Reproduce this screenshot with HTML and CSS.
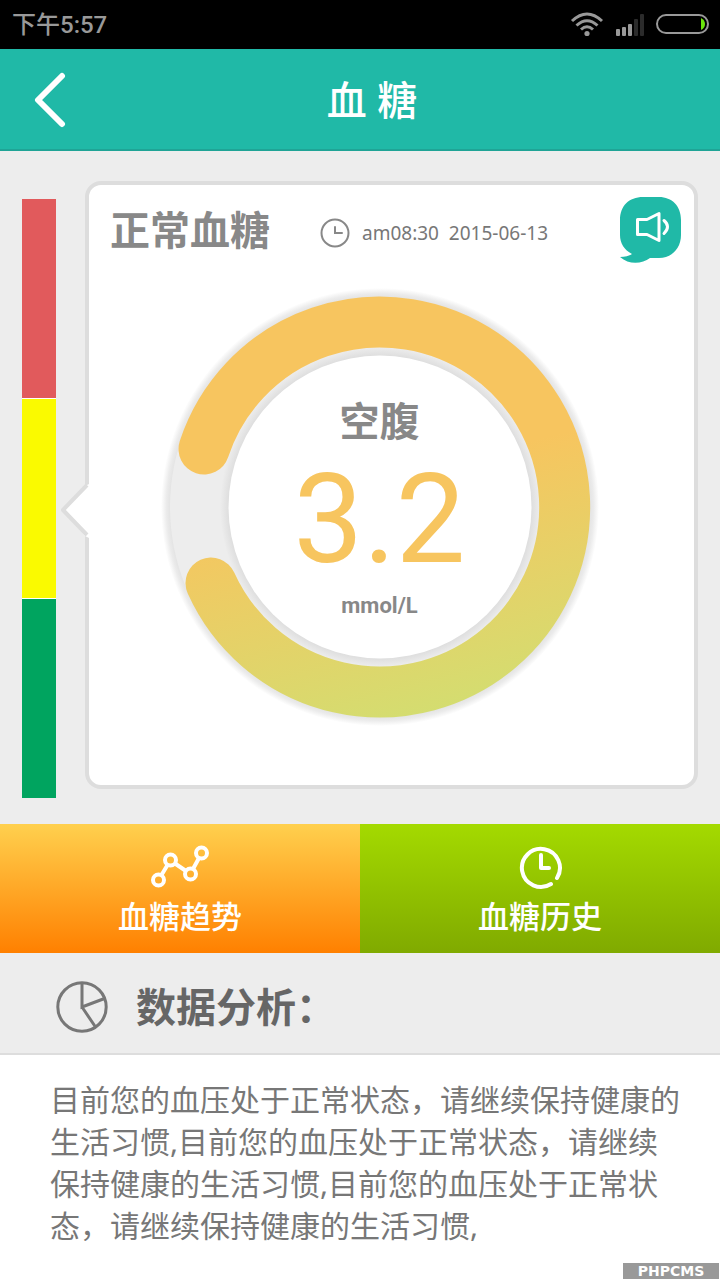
FILE: index.html
```html
<!DOCTYPE html>
<html lang="zh-CN">
<head>
<meta charset="utf-8">
<meta name="viewport" content="width=device-width, initial-scale=1">
<title>血糖</title>
<link rel="stylesheet" href="styles.css">
</head>
<body>
<div class="status">
  <span class="status-time">下午5:57</span>
  <svg class="status-icons" width="140" height="28" viewBox="0 0 140 28" aria-hidden="true">
    <g fill="none" stroke="#999" stroke-width="3">
      <path d="M2 10Q17 -4 32 10"/>
      <path d="M6.500 14.500Q17 5 27.500 14.500"/>
      <path d="M11 18.500Q17 13 23 18.500"/>
      <rect x="87" y="4" width="51" height="18" rx="9" stroke-width="2"/>
    </g>
    <circle cx="17" cy="22.500" r="2.600" fill="#999"/>
    <g fill="#999">
      <rect x="46" y="18" width="4" height="7" rx="1"/>
      <rect x="52" y="16" width="4" height="9" rx="1"/>
      <rect x="58" y="13" width="4" height="12" rx="1"/>
    </g>
    <g fill="#2b2b2b">
      <rect x="64" y="8" width="4" height="17" rx="1"/>
      <rect x="70" y="3" width="4" height="22" rx="1"/>
    </g>
    <path d="M131 7Q135 9 135 13T131 19Z" fill="#6be60c"/>
  </svg>
</div>

<header class="topbar">
  <button class="back" type="button" aria-label="返回">
    <svg width="32" height="56" viewBox="0 0 32 56"><path d="M28 4L4 28L28 52" fill="none" stroke="#fff" stroke-width="6" stroke-linecap="round" stroke-linejoin="round"/></svg>
  </button>
  <h1 class="topbar-title">血 糖</h1>
</header>

<main>
  <section class="reading">
    <div class="scale" aria-hidden="true">
      <div class="level level-high"></div>
      <div class="level level-normal"></div>
      <div class="level level-low"></div>
    </div>
    <article class="card">
      <svg class="pointer" width="28" height="54" viewBox="0 0 28 54" aria-hidden="true">
        <path d="M28 0L24 2L2 27L24 52L28 54Z" fill="#fff"/>
        <path d="M26 1L2 26L26 51" fill="none" stroke="#ddd" stroke-width="4" stroke-linejoin="round"/>
      </svg>
      <div class="card-head">
        <h2 class="card-title">正常血糖</h2>
        <div class="card-meta">
          <svg width="30" height="30" viewBox="0 0 30 30" aria-hidden="true">
            <g fill="none" stroke="#888" stroke-width="2" stroke-linecap="round">
              <circle cx="15" cy="15" r="13.500"/><path d="M15 9V15H22"/>
            </g>
          </svg>
          <time datetime="2015-06-13T08:30">am08:30&nbsp; 2015-06-13</time>
        </div>
        <button class="voice" type="button" aria-label="语音播报">
          <svg width="62" height="67" viewBox="0 0 62 67">
            <path d="M23 0H39C52 0 61 9 61 23V38C61 51 52 61 39 61H30C22 67 9 68 0 60C5 60 9 59 12 57C4 53 0 46 0 38V23C0 9 9 0 23 0Z" fill="#20b9a7"/>
            <g fill="none" stroke="#fff" stroke-width="3" stroke-linecap="round" stroke-linejoin="round">
              <path d="M17.500 22.500H27L39 16.500V43.500L27 37.500H17.500Z"/>
              <path d="M44 23.500Q51 29.500 44 36.500"/>
            </g>
          </svg>
        </button>
      </div>
      <div class="gauge">
        <svg class="gauge-ring" width="440" height="440" viewBox="0 0 440 440" aria-hidden="true">
          <defs>
            <linearGradient id="arc" gradientUnits="userSpaceOnUse" x1="220" y1="193" x2="280" y2="424">
              <stop offset="0" stop-color="#f7c55f"/><stop offset="1" stop-color="#d4dd70"/>
            </linearGradient>
            <radialGradient id="rim" gradientUnits="userSpaceOnUse" cx="220" cy="220" r="219">
              <stop offset="0.955" stop-color="#e2e2e2"/><stop offset="0.975" stop-color="#ebebeb"/><stop offset="1" stop-color="#fff"/>
            </radialGradient>
            <radialGradient id="hub" gradientUnits="userSpaceOnUse" cx="220" cy="220" r="160">
              <stop offset="0.945" stop-color="#dedede"/><stop offset="1" stop-color="#ededed"/>
            </radialGradient>
          </defs>
          <circle cx="220" cy="220" r="219" fill="url(#rim)"/>
          <circle cx="220" cy="220" r="210" fill="#ededed"/>
          <circle cx="220" cy="220" r="160" fill="url(#hub)"/>
          <path d="M44 162A185 185 0 1 1 51 296" fill="none" stroke="url(#arc)" stroke-width="51" stroke-linecap="round"/>
          <circle cx="220" cy="220" r="151.500" fill="#fff"/>
        </svg>
        <div class="gauge-text">
          <div class="gauge-label">空腹</div>
          <div class="gauge-value">3.2</div>
          <div class="gauge-unit">mmol/L</div>
        </div>
      </div>
    </article>
  </section>

  <nav class="actions">
    <button class="action action-trend" type="button">
      <svg width="60" height="46" viewBox="0 0 60 46" aria-hidden="true">
        <g fill="none" stroke="#fff" stroke-width="4">
          <circle cx="8.500" cy="36" r="5.500"/><circle cx="20.500" cy="16" r="5.500"/>
          <circle cx="40.500" cy="30" r="5.500"/><circle cx="51.500" cy="9" r="5.500"/>
          <path d="M11.500 31L17.500 21M25 19.500L36 27M43 25L49 14"/>
        </g>
      </svg>
      <span>血糖趋势</span>
    </button>
    <button class="action action-history" type="button">
      <svg width="46" height="46" viewBox="0 0 46 46" aria-hidden="true">
        <g fill="none" stroke="#fff" stroke-width="4" stroke-linecap="round" stroke-linejoin="round">
          <path d="M34 40A19 19 0 1 1 40 34"/><path d="M24 11V24H32"/>
        </g>
      </svg>
      <span>血糖历史</span>
    </button>
  </nav>

  <section class="analysis">
    <div class="analysis-head">
      <svg width="52" height="52" viewBox="0 0 52 52" aria-hidden="true">
        <g fill="none" stroke="#777" stroke-width="3">
          <circle cx="26" cy="26" r="24.200"/><path d="M26 2V26L48.500 17.500M26 26L39.500 46"/>
        </g>
      </svg>
      <h2 class="analysis-title">数据分析：</h2>
    </div>
    <p class="analysis-text">目前您的血压处于正常状态，请继续保持健康的生活习惯,目前您的血压处于正常状态，请继续保持健康的生活习惯,目前您的血压处于正常状态，请继续保持健康的生活习惯,</p>
    <span class="stamp">PHPCMS</span>
  </section>
</main>
</body>
</html>
```
FILE: styles.css
```css
* { box-sizing: border-box; }

body {
  margin: 0;
  min-height: 100vh;
  display: flex;
  flex-direction: column;
  background: #fff;
  color: #777;
  font-family: "Noto Sans", "Noto Sans CJK SC", sans-serif;
}

h1, h2, p { margin: 0; }
svg { display: block; flex: none; }

button {
  border: 0;
  padding: 0;
  background: none;
  color: inherit;
  font: inherit;
  cursor: pointer;
}

main {
  flex: 1;
  display: flex;
  flex-direction: column;
}

.status {
  display: flex;
  align-items: center;
  justify-content: space-between;
  height: 49px;
  padding: 0 10px 0 12px;
  background: #000;
}

.status-time {
  color: #999;
  font: 500 24px/32px Roboto, "Noto Sans CJK SC", sans-serif;
}

.topbar {
  display: grid;
  grid-template-columns: 1fr auto 1fr;
  align-items: center;
  height: 102px;
  padding: 2px 10px 0 34px;
  background: #20b9a7;
  border-bottom: 2px solid #1fa496;
}

.back { justify-self: start; }

.topbar-title {
  color: #fff;
  font-size: 40px;
  font-weight: 500;
  line-height: 56px;
}

.reading {
  display: flex;
  align-items: flex-start;
  gap: 29px;
  padding: 30px 22px 26px;
  background: #ededed;
}

.scale {
  flex: none;
  display: flex;
  flex-direction: column;
  gap: 1px;
  width: 34px;
  margin-top: 18px;
  background: #fff;
}

.level { height: 199px; }
.level-high { background: #e15a5c; }
.level-normal { background: #fafa00; }
.level-low { background: #00a45f; }

.card {
  position: relative;
  flex: 1;
  padding-bottom: 58px;
  border: 4px solid #ddd;
  border-radius: 16px;
  background: #fff;
}

.pointer {
  position: absolute;
  top: 299px;
  left: -28px;
}

.card-head {
  display: flex;
  align-items: center;
  height: 102px;
  padding: 0 12px 12px 21px;
}

.card-title {
  margin-right: 50px;
  color: #888;
  font-size: 40px;
  font-weight: 700;
  line-height: 56px;
}

.card-meta {
  display: flex;
  align-items: center;
  gap: 12px;
  padding-top: 6px;
  font-size: 19px;
  line-height: 28px;
}

.voice { margin-left: auto; }

.gauge {
  display: grid;
  justify-items: center;
  padding-right: 24px;
}

.gauge-ring, .gauge-text { grid-area: 1 / 1; }

.gauge-text {
  padding-top: 108px;
  color: #888;
  text-align: center;
}

.gauge-label {
  font-size: 40px;
  font-weight: 700;
  line-height: 52px;
}

.gauge-value {
  color: #f7c55f;
  font-family: Roboto, sans-serif;
  font-size: 124px;
  line-height: 146px;
}

.gauge-unit {
  font-family: Roboto, sans-serif;
  font-size: 22px;
  font-weight: 700;
  line-height: 26px;
}

.actions {
  display: grid;
  grid-template-columns: 1fr 1fr;
}

.action {
  display: flex;
  flex-direction: column;
  align-items: center;
  gap: 6px;
  height: 129px;
  padding-top: 20px;
  color: #fff;
  font-size: 31px;
  font-weight: 500;
  line-height: 40px;
}

.action-trend { background: linear-gradient(#ffd04e, #ff8000); }
.action-history { background: linear-gradient(#a4da00, #80aa00); }

.analysis {
  position: relative;
  flex: 1;
}

.analysis-head {
  display: flex;
  align-items: center;
  gap: 28px;
  height: 102px;
  padding: 8px 56px 0;
  border-bottom: 2px solid #ddd;
  background: #ededed;
}

.analysis-title {
  color: #666;
  font-size: 40px;
  font-weight: 700;
  line-height: 56px;
}

.analysis-text {
  padding: 24px 40px 32px 50px;
  font-size: 30px;
  line-height: 42px;
}

.stamp {
  position: absolute;
  right: 1px;
  bottom: 1px;
  width: 96px;
  background: #999;
  color: #fff;
  font: 700 14px/16px "DejaVu Sans", sans-serif;
  text-align: center;
}
```
